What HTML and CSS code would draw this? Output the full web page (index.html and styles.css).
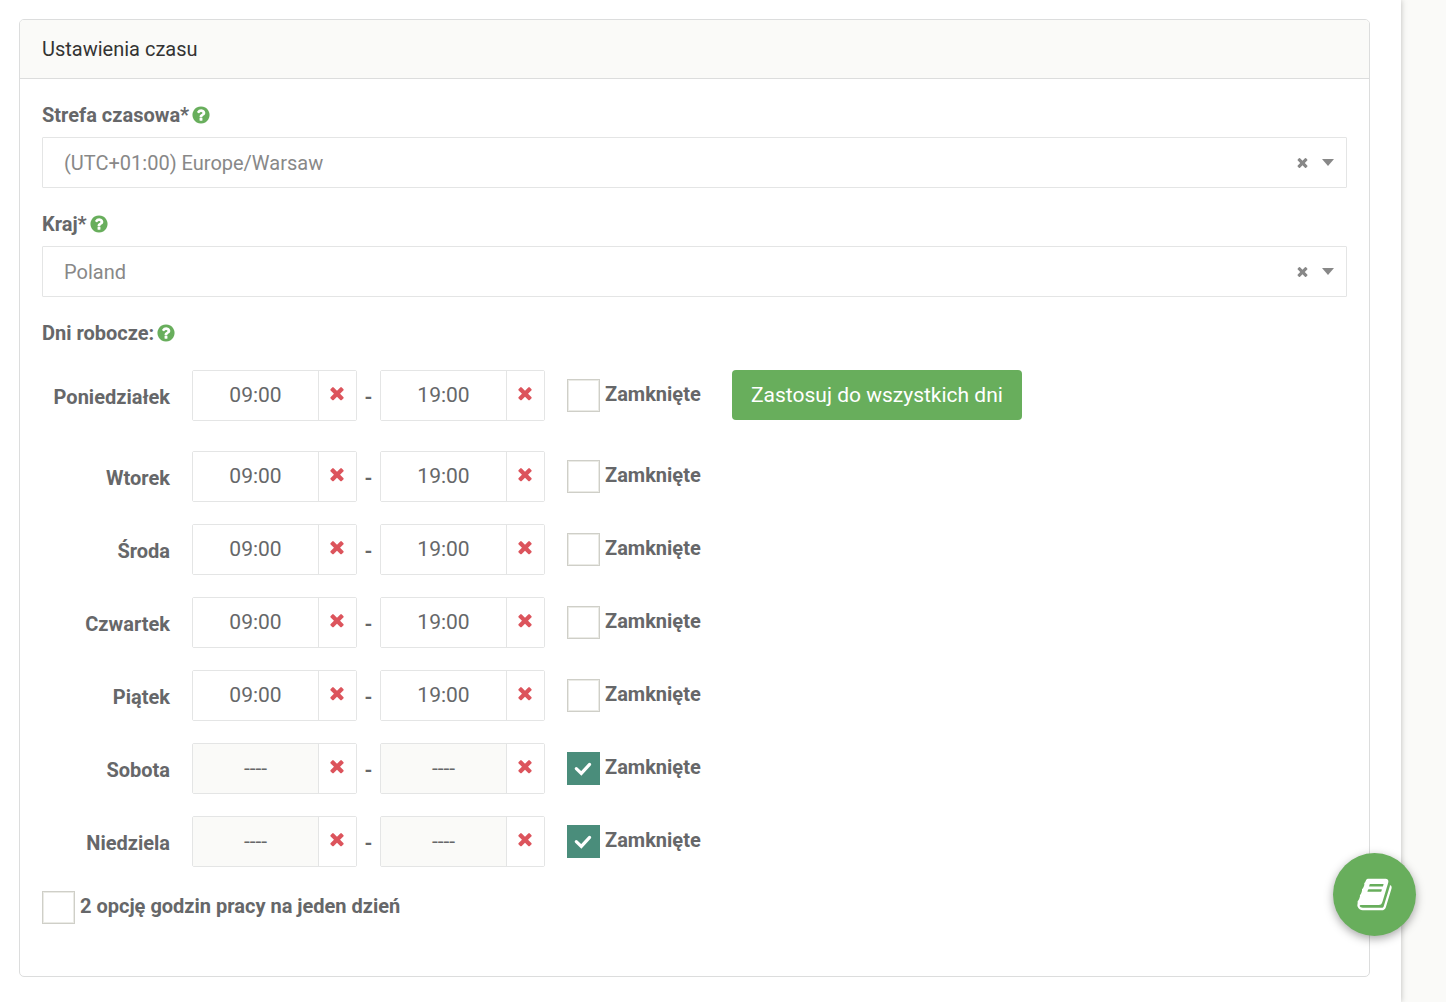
FILE: index.html
```html
<!DOCTYPE html>
<html lang="pl">
<head>
<meta charset="utf-8">
<meta name="viewport" content="width=device-width, initial-scale=1">
<title>Ustawienia czasu</title>
<link rel="stylesheet" href="styles.css">
</head>
<body>
<svg class="sprite" aria-hidden="true">
  <symbol id="i-help" viewBox="0 0 1792 1792"><path d="M1024 1376v-192q0-14-9-23t-23-9h-192q-14 0-23 9t-9 23v192q0 14 9 23t23 9h192q14 0 23-9t9-23zm256-672q0-88-55.5-163t-138.5-116-170-41q-243 0-371 213-15 24 8 42l132 100q7 6 19 6 16 0 25-12 53-68 86-92 34-24 86-24 48 0 85.5 26t37.5 59q0 38-20 61t-68 45q-63 28-115.5 86.5t-52.5 125.5v36q0 14 9 23t23 9h192q14 0 23-9t9-23q0-19 21.5-49.5t54.5-49.5q32-18 49-28.5t46-35 44.5-48 28-60.5 12.5-81zm384 192q0 209-103 385.5t-279.5 279.5-385.5 103-385.5-103-279.5-279.5-103-385.5 103-385.5 279.5-279.5 385.5-103 385.5 103 279.5 279.5 103 385.5z"/></symbol>
  <symbol id="i-times" viewBox="0 0 1792 1792"><path d="M1490 1322q0 40-28 68l-136 136q-28 28-68 28t-68-28l-294-294-294 294q-28 28-68 28t-68-28l-136-136q-28-28-28-68t28-68l294-294-294-294q-28-28-28-68t28-68l136-136q28-28 68-28t68 28l294 294 294-294q28-28 68-28t68 28l136 136q28 28 28 68t-28 68l-294 294 294 294q28 28 28 68z"/></symbol>
  <symbol id="i-caret" viewBox="0 0 12 7"><path d="M0 0h12L6 7z"/></symbol>
  <symbol id="i-book" viewBox="0 0 1792 1792"><path d="M1703 478q40 57 18 129l-275 906q-19 64-76.5 107.5t-122.5 43.5h-923q-77 0-148.5-53.5t-99.5-131.5q-24-67-2-127 0-4 3-27t4-37q1-8-3-21.5t-3-19.5q2-11 8-21t16.5-23.5 16.5-23.5q23-38 45-91.5t30-91.5q3-10 .5-30t-.5-28q3-11 17-28t17-23q21-36 42-92t25-90q1-9-2.5-32t.5-28q4-13 22-30.5t22-22.5q19-26 42.5-84.5t27.5-96.5q1-8-3-25.5t-2-26.5q2-8 9-18t18-23 17-21q8-12 16.5-30.5t15-35 16-36 19.5-32 26.5-23.5 36-11.5 47.5 5.5l-1 3q38-9 51-9h761q74 0 114 56t18 130l-274 906q-36 119-71.5 153.5t-128.5 34.5h-869q-27 0-38 15-11 16-1 43 24 70 144 70h923q29 0 56-15.5t35-41.5l300-987q7-22 5-57 38 15 59 43zm-1064 2q-4 13 2 22.5t20 9.5h608q13 0 25.5-9.5t16.5-22.5l21-64q4-13-2-22.5t-20-9.5h-608q-13 0-25.5 9.5t-16.5 22.5zm-83 256q-4 13 2 22.5t20 9.5h608q13 0 25.5-9.5t16.5-22.5l21-64q4-13-2-22.5t-20-9.5h-608q-13 0-25.5 9.5t-16.5 22.5z"/></symbol>
</svg>
<main class="page">
  <section class="panel">
    <h1 class="panel-title">Ustawienia czasu</h1>
    <form class="panel-body">
      <div class="field">
        <div class="field-head"><label for="tz">Strefa czasowa*</label><svg class="help"><use href="#i-help"/></svg></div>
        <div class="picker">
          <select id="tz"><option>(UTC+01:00) Europe/Warsaw</option></select>
          <button type="button" class="picker-clear" aria-label="Wyczyść"><svg><use href="#i-times"/></svg></button>
          <svg class="caret"><use href="#i-caret"/></svg>
        </div>
      </div>
      <div class="field">
        <div class="field-head"><label for="country">Kraj*</label><svg class="help"><use href="#i-help"/></svg></div>
        <div class="picker">
          <select id="country"><option>Poland</option></select>
          <button type="button" class="picker-clear" aria-label="Wyczyść"><svg><use href="#i-times"/></svg></button>
          <svg class="caret"><use href="#i-caret"/></svg>
        </div>
      </div>
      <div class="field-head"><span>Dni robocze:</span><svg class="help"><use href="#i-help"/></svg></div>
      <div class="days">
        <div class="day day-first">
          <label class="day-name" for="mon">Poniedziałek</label>
          <div class="time"><input id="mon" type="text" value="09:00"><button type="button" aria-label="Usuń"><svg><use href="#i-times"/></svg></button></div>
          <span class="dash">-</span>
          <div class="time"><input type="text" value="19:00" aria-label="Poniedziałek do"><button type="button" aria-label="Usuń"><svg><use href="#i-times"/></svg></button></div>
          <label class="check"><input type="checkbox"><span>Zamknięte</span></label>
          <button type="button" class="apply">Zastosuj do wszystkich dni</button>
        </div>
        <div class="day">
          <label class="day-name" for="tue">Wtorek</label>
          <div class="time"><input id="tue" type="text" value="09:00"><button type="button" aria-label="Usuń"><svg><use href="#i-times"/></svg></button></div>
          <span class="dash">-</span>
          <div class="time"><input type="text" value="19:00" aria-label="Wtorek do"><button type="button" aria-label="Usuń"><svg><use href="#i-times"/></svg></button></div>
          <label class="check"><input type="checkbox"><span>Zamknięte</span></label>
        </div>
        <div class="day">
          <label class="day-name" for="wed">Środa</label>
          <div class="time"><input id="wed" type="text" value="09:00"><button type="button" aria-label="Usuń"><svg><use href="#i-times"/></svg></button></div>
          <span class="dash">-</span>
          <div class="time"><input type="text" value="19:00" aria-label="Środa do"><button type="button" aria-label="Usuń"><svg><use href="#i-times"/></svg></button></div>
          <label class="check"><input type="checkbox"><span>Zamknięte</span></label>
        </div>
        <div class="day">
          <label class="day-name" for="thu">Czwartek</label>
          <div class="time"><input id="thu" type="text" value="09:00"><button type="button" aria-label="Usuń"><svg><use href="#i-times"/></svg></button></div>
          <span class="dash">-</span>
          <div class="time"><input type="text" value="19:00" aria-label="Czwartek do"><button type="button" aria-label="Usuń"><svg><use href="#i-times"/></svg></button></div>
          <label class="check"><input type="checkbox"><span>Zamknięte</span></label>
        </div>
        <div class="day">
          <label class="day-name" for="fri">Piątek</label>
          <div class="time"><input id="fri" type="text" value="09:00"><button type="button" aria-label="Usuń"><svg><use href="#i-times"/></svg></button></div>
          <span class="dash">-</span>
          <div class="time"><input type="text" value="19:00" aria-label="Piątek do"><button type="button" aria-label="Usuń"><svg><use href="#i-times"/></svg></button></div>
          <label class="check"><input type="checkbox"><span>Zamknięte</span></label>
        </div>
        <div class="day">
          <label class="day-name" for="sat">Sobota</label>
          <div class="time"><input id="sat" type="text" value="----" disabled><button type="button" aria-label="Usuń"><svg><use href="#i-times"/></svg></button></div>
          <span class="dash">-</span>
          <div class="time"><input type="text" value="----" aria-label="Sobota do" disabled><button type="button" aria-label="Usuń"><svg><use href="#i-times"/></svg></button></div>
          <label class="check"><input type="checkbox" checked><span>Zamknięte</span></label>
        </div>
        <div class="day">
          <label class="day-name" for="sun">Niedziela</label>
          <div class="time"><input id="sun" type="text" value="----" disabled><button type="button" aria-label="Usuń"><svg><use href="#i-times"/></svg></button></div>
          <span class="dash">-</span>
          <div class="time"><input type="text" value="----" aria-label="Niedziela do" disabled><button type="button" aria-label="Usuń"><svg><use href="#i-times"/></svg></button></div>
          <label class="check"><input type="checkbox" checked><span>Zamknięte</span></label>
        </div>
      </div>
      <label class="check"><input type="checkbox"><span>2 opcję godzin pracy na jeden dzień</span></label>
    </form>
  </section>
</main>
<button type="button" class="fab" aria-label="Pomoc"><svg><use href="#i-book"/></svg></button>
</body>
</html>
```

FILE: styles.css
```css
* { box-sizing: border-box; }

body {
  margin: 0;
  background: #fafaf8;
  color: #666769;
  font: 400 20px/26px Roboto, "Liberation Sans", sans-serif;
}

button, input, select { font: inherit; color: inherit; margin: 0; }
button { cursor: pointer; }
svg { display: block; fill: currentColor; }
.sprite { display: none; }

.page {
  min-height: 100vh;
  margin-right: 45px;
  padding: 19px 31px 25px 19px;
  background: #fff;
  box-shadow: 0 0 6px rgba(0, 0, 0, .25);
}

.panel {
  border: 1px solid #dcdddd;
  border-radius: 5px;
  overflow: hidden;
}

.panel-title {
  margin: 0;
  padding: 16px 22px;
  border-bottom: 1px solid #dcdddd;
  background: #fafaf8;
  color: #333;
  font-size: 20px;
  font-weight: 400;
}

.panel-body { padding: 23px 22px 52px; }
.field { margin-bottom: 23px; }

.field-head {
  display: flex;
  align-items: center;
  gap: 2px;
  margin-bottom: 9px;
  font-weight: 700;
}
.help { width: 20px; height: 20px; color: #68ae5c; }

.picker {
  display: flex;
  align-items: center;
  height: 51px;
  padding: 0 12px 0 21px;
  border: 1px solid #e4e5e5;
  border-radius: 1px;
  color: #888;
}
.picker select {
  flex: 1;
  min-width: 0;
  height: 100%;
  padding: 0;
  border: 0;
  background: none;
  appearance: none;
}
.picker-clear { padding: 4px; border: 0; background: none; }
.picker-clear svg { width: 15px; height: 15px; }
.caret { width: 12px; height: 7px; margin-left: 8px; }

.days {
  display: flex;
  flex-direction: column;
  gap: 22px;
  margin: 24px 0;
}

.day { display: flex; align-items: center; }
.day-first { margin-bottom: 8px; }
.day-name {
  width: 128px;
  margin-right: 22px;
  padding-top: 2px;
  text-align: right;
  font-weight: 700;
}
.dash {
  width: 23px;
  padding-top: 2px;
  text-align: center;
  font-weight: 700;
}

.time {
  display: flex;
  width: 165px;
  height: 51px;
  border: 1px solid #e4e5e5;
  border-radius: 2px;
}
.time input {
  flex: 1;
  min-width: 0;
  padding: 0 0 2px;
  border: 0;
  background: #fff;
  font-size: 21px;
  text-align: center;
}
.time input:disabled { background: #fafaf8; }
.time button {
  width: 38px;
  padding: 0 8px 5px;
  border: 0;
  border-left: 1px solid #e4e5e5;
  background: #fff;
  color: #dc545c;
}
.time button svg { width: 20px; height: 20px; }

.check {
  display: flex;
  gap: 5px;
  font-weight: 700;
  line-height: 30px;
}
.day .check {
  align-self: flex-start;
  width: 165px;
  margin: 9px 0 0 22px;
}
.check input {
  flex: none;
  width: 33px;
  height: 33px;
  border: 1px solid #cfcfc8;
  background: #fff;
  box-shadow: inset 0 0 0 1px #ebebe6;
  appearance: none;
}
.check input:checked {
  border: 0;
  box-shadow: none;
  background: #4a8d7b url("data:image/svg+xml,%3Csvg xmlns='http://www.w3.org/2000/svg' viewBox='0 0 33 33'%3E%3Cpath fill='none' stroke='%23fff' stroke-width='3.2' stroke-linecap='round' d='M9.3 16.7l5 4.7 8.3-9'/%3E%3C/svg%3E") center / 33px no-repeat;
}

.apply {
  align-self: flex-start;
  height: 50px;
  padding: 0 19px;
  border: 0;
  border-radius: 4px;
  background: #68ae5c;
  color: #fff;
  font-size: 21px;
}

.fab {
  position: fixed;
  right: 30px;
  bottom: 66px;
  display: grid;
  place-items: center;
  width: 83px;
  height: 83px;
  padding: 0;
  border: 0;
  border-radius: 50%;
  background: #68ae5c;
  box-shadow: 0 3px 10px rgba(0, 0, 0, .35);
  color: #fff;
}
.fab svg { width: 37px; height: 37px; }
```
